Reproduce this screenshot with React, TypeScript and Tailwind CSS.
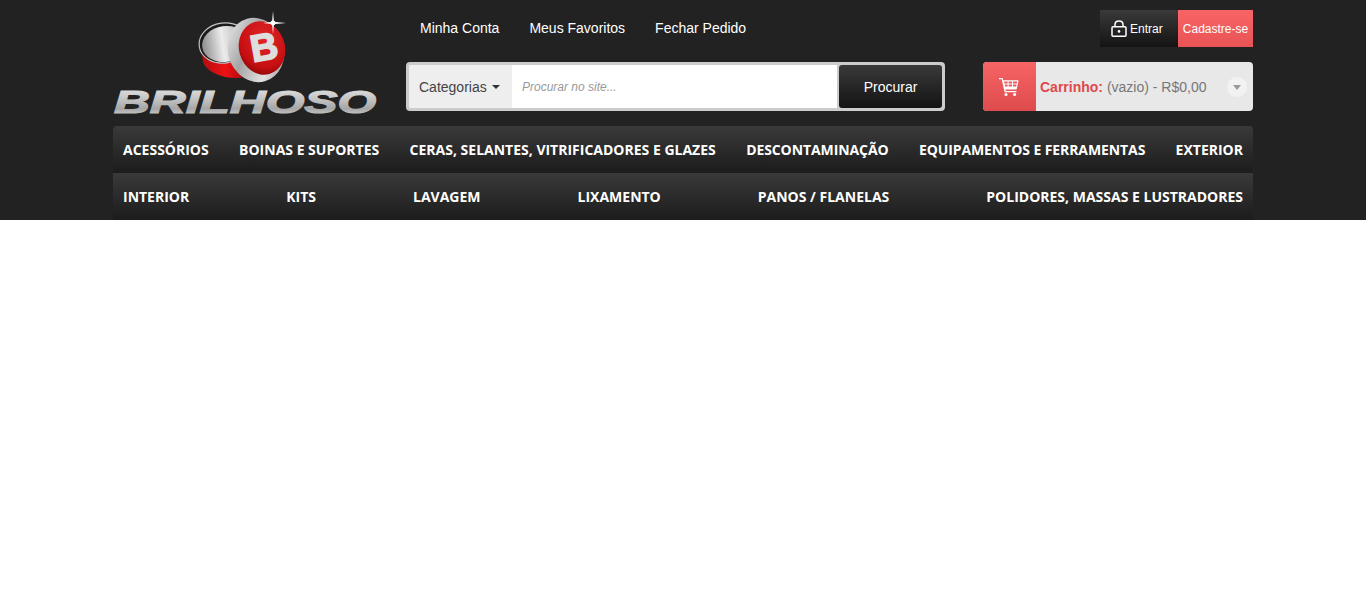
import React from 'react';

const NAV_ROW_1 = [
  { label: 'ACESSÓRIOS' },
  { label: 'BOINAS E SUPORTES' },
  { label: 'CERAS, SELANTES, VITRIFICADORES E GLAZES' },
  { label: 'DESCONTAMINAÇÃO', tight: true },
  { label: 'EQUIPAMENTOS E FERRAMENTAS', tight: true },
  { label: 'EXTERIOR' },
];

const NAV_ROW_2 = [
  { label: 'INTERIOR' },
  { label: 'KITS' },
  { label: 'LAVAGEM' },
  { label: 'LIXAMENTO' },
  { label: 'PANOS / FLANELAS' },
  { label: 'POLIDORES, MASSAS E LUSTRADORES' },
];

type NavItem = { label: string; tight?: boolean };

const Logo: React.FC = () => (
  <svg width="270" height="112" viewBox="113 10 270 112" className="block">
    <defs>
      <linearGradient id="silver" x1="0" y1="0" x2="0" y2="1">
        <stop offset="0" stopColor="#ececec" />
        <stop offset="0.5" stopColor="#bdbdbd" />
        <stop offset="0.7" stopColor="#a6a6a6" />
        <stop offset="1" stopColor="#e2e2e2" />
      </linearGradient>
      <linearGradient id="inner" x1="0" y1="0" x2="1" y2="0">
        <stop offset="0" stopColor="#8d8d8d" />
        <stop offset="0.45" stopColor="#ececec" />
        <stop offset="1" stopColor="#a8a8a8" />
      </linearGradient>
      <linearGradient id="ring" x1="0" y1="0" x2="1" y2="1">
        <stop offset="0" stopColor="#f4f4f4" />
        <stop offset="0.4" stopColor="#a5a5a5" />
        <stop offset="0.72" stopColor="#e2e2e2" />
        <stop offset="1" stopColor="#808080" />
      </linearGradient>
      <linearGradient id="redside" x1="0" y1="0" x2="1" y2="0">
        <stop offset="0" stopColor="#b00d10" />
        <stop offset="0.5" stopColor="#ee1114" />
        <stop offset="1" stopColor="#8c0a0c" />
      </linearGradient>
      <radialGradient id="redtop" cx="0.6" cy="0.35" r="0.75">
        <stop offset="0" stopColor="#e02629" />
        <stop offset="0.7" stopColor="#c70f12" />
        <stop offset="1" stopColor="#7f0608" />
      </radialGradient>
    </defs>
    {/* lata */}
    <path d="M201 46 L203 62 C207 72 222 79 241 78 L250 60 L225 30 Z" fill="url(#redside)" />
    <ellipse cx="224" cy="43" rx="25" ry="20" fill="#1b1b1b" stroke="#c4c4c4" strokeWidth="1.2" transform="rotate(-8 224 43)" />
    <ellipse cx="225" cy="44" rx="23" ry="18" fill="url(#inner)" transform="rotate(-8 225 44)" />
    {/* tampa */}
    <ellipse cx="256" cy="50" rx="28" ry="32.5" fill="url(#ring)" transform="rotate(-16 256 50)" />
    <ellipse cx="262" cy="48" rx="23" ry="27" fill="url(#redtop)" transform="rotate(-16 262 48)" />
    <text
      x="264"
      y="60"
      textAnchor="middle"
      fontFamily="'Liberation Sans', sans-serif"
      fontWeight="700"
      fontSize="38"
      fill="#dedede"
      stroke="#dedede"
      strokeWidth="1.6"
      transform="rotate(-10 264 47)"
    >
      B
    </text>
    {/* brilho */}
    <path d="M273 11 L274 21.8 L286 23 L274 24.2 L273 34 L272 24.2 L263 23 L272 21.8 Z" fill="#f0f0f0" />
    <circle cx="273" cy="23" r="2.4" fill="#ffffff" />
    <text
      x="114"
      y="112.5"
      textLength="262"
      lengthAdjust="spacingAndGlyphs"
      fontFamily="'Liberation Sans', sans-serif"
      fontWeight="700"
      fontStyle="italic"
      fontSize="32"
      fill="url(#silver)"
      stroke="url(#silver)"
      strokeWidth="1.2"
    >
      BRILHOSO
    </text>
  </svg>
);

const LockIcon: React.FC = () => (
  <svg width="16" height="17" viewBox="0 0 16 17" fill="none" stroke="#fff" strokeWidth="1.5">
    <rect x="1" y="6.8" width="14" height="9.4" rx="1" />
    <path d="M4 6.8 V4.6 C4 2.4 5.8 0.9 8 0.9 C10.2 0.9 12 2.4 12 4.6 V6.8" />
    <circle cx="8" cy="11.4" r="1.3" fill="#fff" stroke="none" />
  </svg>
);

const CartIcon: React.FC = () => (
  <svg width="20" height="18" viewBox="0 0 20 18" fill="#fff">
    <path
      d="M0 0 H3.6 L4.2 2.2 H19.6 L17.6 11.4 H6.4 L6.8 13 H17.4 V14.2 H5.6 L2.7 1.3 H0 Z M5 3.4 L5.5 5.4 H8.6 V3.4 Z M9.6 3.4 V5.4 H13 V3.4 Z M14 3.4 V5.4 H17.9 L18.2 3.4 Z M5.8 6.4 L6.2 8.4 H8.6 V6.4 Z M9.6 6.4 V8.4 H13 V6.4 Z M14 6.4 V8.4 H17.2 L17.6 6.4 Z"
      fillRule="evenodd"
    />
    <circle cx="7" cy="16.4" r="1.5" />
    <circle cx="15.6" cy="16.4" r="1.5" />
  </svg>
);

const NavRow: React.FC<{ items: NavItem[]; rounded?: boolean }> = ({ items, rounded }) => (
  <ul
    className={`flex h-[47px] items-center justify-between bg-gradient-to-b from-[#3a3a3a] to-[#1c1c1c] px-[10px] font-['Open_Sans',sans-serif] text-sm font-bold text-white ${
      rounded ? 'rounded-t-[4px]' : ''
    }`}
  >
    {items.map((item) => (
      <li key={item.label} className={item.tight ? 'tracking-[-0.09px]' : ''}>
        {item.label}
      </li>
    ))}
  </ul>
);

export default function App() {
  return (
    <div className="min-h-[613px] bg-white font-['Liberation_Sans',Arial,sans-serif]">
      <header className="h-[220px] bg-[#222222]">
        <div className="mx-auto w-[1140px]">
          <div className="flex h-[126px]">
            <div className="w-[293px] pt-[10px]">
              <Logo />
            </div>

            <div className="w-[539px]">
              <nav className="flex h-[62px] items-center gap-[30px] pb-[6px] pl-[14px] text-sm text-white">
                <a>Minha Conta</a>
                <a>Meus Favoritos</a>
                <a>Fechar Pedido</a>
              </nav>
              <div className="flex h-[49px] overflow-hidden rounded-[4px] border-[3px] border-[#cccccc] bg-[#cccccc]">
                <button className="flex w-[103px] items-center gap-[5px] bg-[#eeeeee] pl-[10px] text-sm text-[#444444]">
                  Categorias
                  <span className="mt-[1px] border-x-[4px] border-t-[4px] border-x-transparent border-t-[#333333]" />
                </button>
                <input
                  readOnly
                  placeholder="Procurar no site..."
                  className="min-w-0 flex-1 bg-white px-[10px] text-xs italic text-[#333333] outline-none placeholder:text-[#999999]"
                />
                <button className="ml-[2px] w-[103px] rounded-[3px] bg-gradient-to-b from-[#3a3a3a] to-[#141414] text-sm text-white">
                  Procurar
                </button>
              </div>
            </div>

            <div className="ml-[38px] w-[270px]">
              <div className="flex h-[62px] items-start justify-end pt-[10px] text-xs text-white">
                <a className="flex h-[37px] w-[78px] items-center gap-[3px] bg-gradient-to-b from-[#3a3a3a] to-[#141414] pl-[11px]">
                  <LockIcon />
                  Entrar
                </a>
                <a className="flex h-[37px] w-[75px] items-center justify-center bg-gradient-to-b from-[#f96567] to-[#e85355]">
                  Cadastre-se
                </a>
              </div>
              <div className="flex h-[49px] items-center overflow-hidden rounded-[4px] bg-[#e8e8e8] text-sm text-[#777777]">
                <div className="flex h-full w-[53px] items-center justify-center bg-gradient-to-b from-[#f76466] to-[#dd4b4d] pr-[2px]">
                  <CartIcon />
                </div>
                <p className="ml-[4px] flex-1">
                  <b className="text-[#e0484c]">Carrinho:</b> (vazio) - R$0,00
                </p>
                <span className="mr-[6px] flex h-[20px] w-[20px] items-center justify-center rounded-full bg-[#f2f2f2]">
                  <span className="mt-[1px] border-x-[4px] border-t-[5px] border-x-transparent border-t-[#999999]" />
                </span>
              </div>
            </div>
          </div>

          <NavRow items={NAV_ROW_1} rounded />
          <NavRow items={NAV_ROW_2} />
        </div>
      </header>
    </div>
  );
}
